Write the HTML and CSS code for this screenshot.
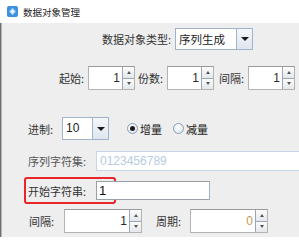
FILE: index.html
```html
<!DOCTYPE html>
<html lang="zh-CN">
<head>
    <meta charset="UTF-8">
    <title>数据对象管理</title>
    <link rel="stylesheet" href="styles.css">
</head>
<body>
    <div class="window">
        <div class="titlebar">
            <svg class="app-icon" width="11" height="11" viewBox="0 0 11 11">
                <rect x="0" y="0" width="11" height="11" rx="2" fill="#3d8fe0"/>
                <path d="M5.5 1.8 L9 5.5 L5.5 9.2 L2 5.5 Z" fill="#a9d3f5"/>
                <path d="M5.5 3.6 L7.3 5.5 L5.5 7.4 L3.7 5.5 Z" fill="#ffffff"/>
            </svg>
            <span class="title">数据对象管理</span>
        </div>

        <div class="content">
            <div class="row row-type">
                <span class="label">数据对象类型:</span>
                <div class="combo combo-type">
                    <span class="combo-text">序列生成</span>
                    <span class="combo-btn"><i class="tri"></i></span>
                </div>
            </div>

            <div class="row row-range">
                <span class="label lbl-start">起始:</span>
                <div class="spinner sp-small">
                    <span class="sp-value">1</span>
                    <span class="sp-btns"><span class="sp-up"><i></i></span><span class="sp-down"><i></i></span></span>
                </div>
                <span class="label lbl-count">份数:</span>
                <div class="spinner sp-small">
                    <span class="sp-value">1</span>
                    <span class="sp-btns"><span class="sp-up"><i></i></span><span class="sp-down"><i></i></span></span>
                </div>
                <span class="label lbl-step">间隔:</span>
                <div class="spinner sp-small">
                    <span class="sp-value">1</span>
                    <span class="sp-btns"><span class="sp-up"><i></i></span><span class="sp-down"><i></i></span></span>
                </div>
            </div>

            <div class="row row-radix">
                <span class="label">进制:</span>
                <div class="combo combo-radix">
                    <span class="combo-text num">10</span>
                    <span class="combo-btn"><i class="tri"></i></span>
                </div>
                <label class="radio checked"><span class="dot"></span>增量</label>
                <label class="radio"><span class="dot"></span>减量</label>
            </div>

            <div class="row row-charset">
                <span class="label">序列字符集:</span>
                <div class="field field-charset">0123456789</div>
            </div>

            <div class="row row-begin">
                <div class="highlight">
                    <span class="label">开始字符串:</span>
                </div>
                <div class="field field-begin">1</div>
            </div>

            <div class="row row-period">
                <span class="label">间隔:</span>
                <div class="spinner sp-wide">
                    <span class="sp-value">1</span>
                    <span class="sp-btns"><span class="sp-up"><i></i></span><span class="sp-down"><i></i></span></span>
                </div>
                <span class="label lbl-period">周期:</span>
                <div class="spinner sp-wide">
                    <span class="sp-value zero">0</span>
                    <span class="sp-btns"><span class="sp-up"><i></i></span><span class="sp-down"><i></i></span></span>
                </div>
            </div>
        </div>
    </div>
</body>
</html>
```

FILE: styles.css
```css
body{
    margin: 0;
    background: #ffffff;
    font-family: "Noto Sans CJK SC", "Liberation Sans", sans-serif;
    font-size: 11px;
    color: #333333;
}
.window{
    width: 299px;
    height: 245px;
    overflow: hidden;
}
.titlebar{
    height: 23px;
    display: flex;
    align-items: center;
    padding-left: 7px;
    background: #ffffff;
}
.app-icon{
    margin-right: 5px;
}
.title{
    color: #222222;
    font-size: 9.5px;
    line-height: 12px;
}
.content{
    height: 214px;
    background: #eeeeee;
    border-left: 1px solid #6f6f6f;
    box-shadow: inset 1px 0 0 #b4b4b4;
    overflow: hidden;
}
.row{
    display: flex;
    align-items: center;
    white-space: nowrap;
}
.row > *{
    flex-shrink: 0;
}
.label{
    line-height: 14px;
    color: #333333;
}

/* combo boxes */
.combo{
    display: flex;
    background: #ffffff;
    border: 1px solid #9fb4cc;
    box-sizing: border-box;
}
.combo-text{
    flex: 1;
    padding-left: 3px;
    line-height: 20px;
    color: #222222;
    font-size: 11.5px;
}
.combo-text.num{
    font-family: "Liberation Sans", sans-serif;
    font-size: 12px;
}
.combo-btn{
    width: 15px;
    display: flex;
    align-items: center;
    justify-content: center;
    border-left: 1px solid #9fb4cc;
    background: linear-gradient(#f4f7fb, #dfe6ef);
}
.tri{
    width: 0;
    height: 0;
    border-left: 4px solid transparent;
    border-right: 4px solid transparent;
    border-top: 4px solid #1a1a1a;
}

/* spinners */
.spinner{
    display: flex;
    height: 24px;
    box-sizing: border-box;
    border: 1px solid #b3b3b3;
    border-top-color: #9a9a9a;
    background: #ffffff;
}
.sp-value{
    flex: 1;
    text-align: right;
    padding-right: 2px;
    line-height: 22px;
    font-family: "Liberation Sans", sans-serif;
    font-size: 12px;
    color: #2a2a2a;
}
.sp-value.zero{
    color: #c89850;
}
.sp-btns{
    width: 11px;
    display: flex;
    flex-direction: column;
    border-left: 1px solid #9aa8b6;
}
.sp-up, .sp-down{
    flex: 1;
    display: flex;
    align-items: center;
    justify-content: center;
    background: linear-gradient(#fbfbfb, #e4e8ec);
}
.sp-up{
    border-bottom: 1px solid #9aa8b6;
}
.sp-up i, .sp-down i{
    width: 0;
    height: 0;
    border-left: 2px solid transparent;
    border-right: 2px solid transparent;
}
.sp-up i{
    border-bottom: 3px solid #555555;
}
.sp-down i{
    border-top: 3px solid #555555;
}
.sp-small{
    width: 47px;
}
.sp-wide{
    width: 78px;
}

/* row 1 */
.row-type{
    margin-top: 5px;
    padding-left: 101px;
}
.row-type .label{
    width: 73px;
}
.combo-type{
    width: 78px;
    height: 22px;
}

/* row 2 */
.row-range{
    margin-top: 16px;
    padding-left: 58px;
}
.lbl-start{
    width: 29px;
}
.lbl-count{
    width: 29px;
    margin-left: 3px;
}
.lbl-step{
    width: 29px;
    margin-left: 5px;
}

/* row 3 */
.row-radix{
    margin-top: 27px;
    padding-left: 27px;
}
.row-radix .label{
    width: 34px;
}
.combo-radix{
    width: 47px;
    height: 23px;
}
.radio{
    display: flex;
    align-items: center;
    line-height: 14px;
    color: #222222;
}
.radio .dot{
    width: 9px;
    height: 9px;
    border-radius: 50%;
    border: 1px solid #8a9db3;
    background: radial-gradient(circle at 40% 35%, #ffffff, #d6e2ef);
    margin-right: 2px;
    position: relative;
}
.radio.checked{
    margin-left: 18px;
}
.radio.checked .dot::after{
    content: "";
    position: absolute;
    left: 2px;
    top: 2px;
    width: 5px;
    height: 5px;
    border-radius: 50%;
    background: #1c1c1c;
}
.radio + .radio{
    margin-left: 11px;
}

/* row 4 */
.row-charset{
    margin-top: 11px;
    padding-left: 27px;
}
.row-charset .label{
    width: 68px;
    color: #555555;
}
.field{
    height: 20px;
    box-sizing: border-box;
    background: #ffffff;
    line-height: 18px;
    font-family: "Liberation Sans", sans-serif;
    font-size: 12px;
}
.field-charset{
    width: 220px;
    border: 1px solid #c6d6e8;
    padding-left: 3px;
    color: #b7cbe2;
}

/* row 5 */
.row-begin{
    margin-top: 6px;
    padding-left: 23px;
}
.highlight{
    height: 27px;
    width: 92px;
    box-sizing: border-box;
    border: 2px solid #e8262a;
    border-radius: 3px;
    padding-left: 2px;
    display: flex;
    align-items: center;
}
.field-begin{
    width: 114px;
    height: 19px;
    margin-left: -20px;
    border: 1px solid #9aa0a8;
    border-right-color: #a5b4c4;
    padding-left: 2px;
    color: #111111;
    font-size: 13px;
}

/* row 6 */
.row-period{
    margin-top: 5px;
    padding-left: 28px;
}
.row-period .label{
    width: 35px;
}
.row-period .lbl-period{
    width: 26px;
    margin-left: 14px;
    margin-right: 8px;
}
```
